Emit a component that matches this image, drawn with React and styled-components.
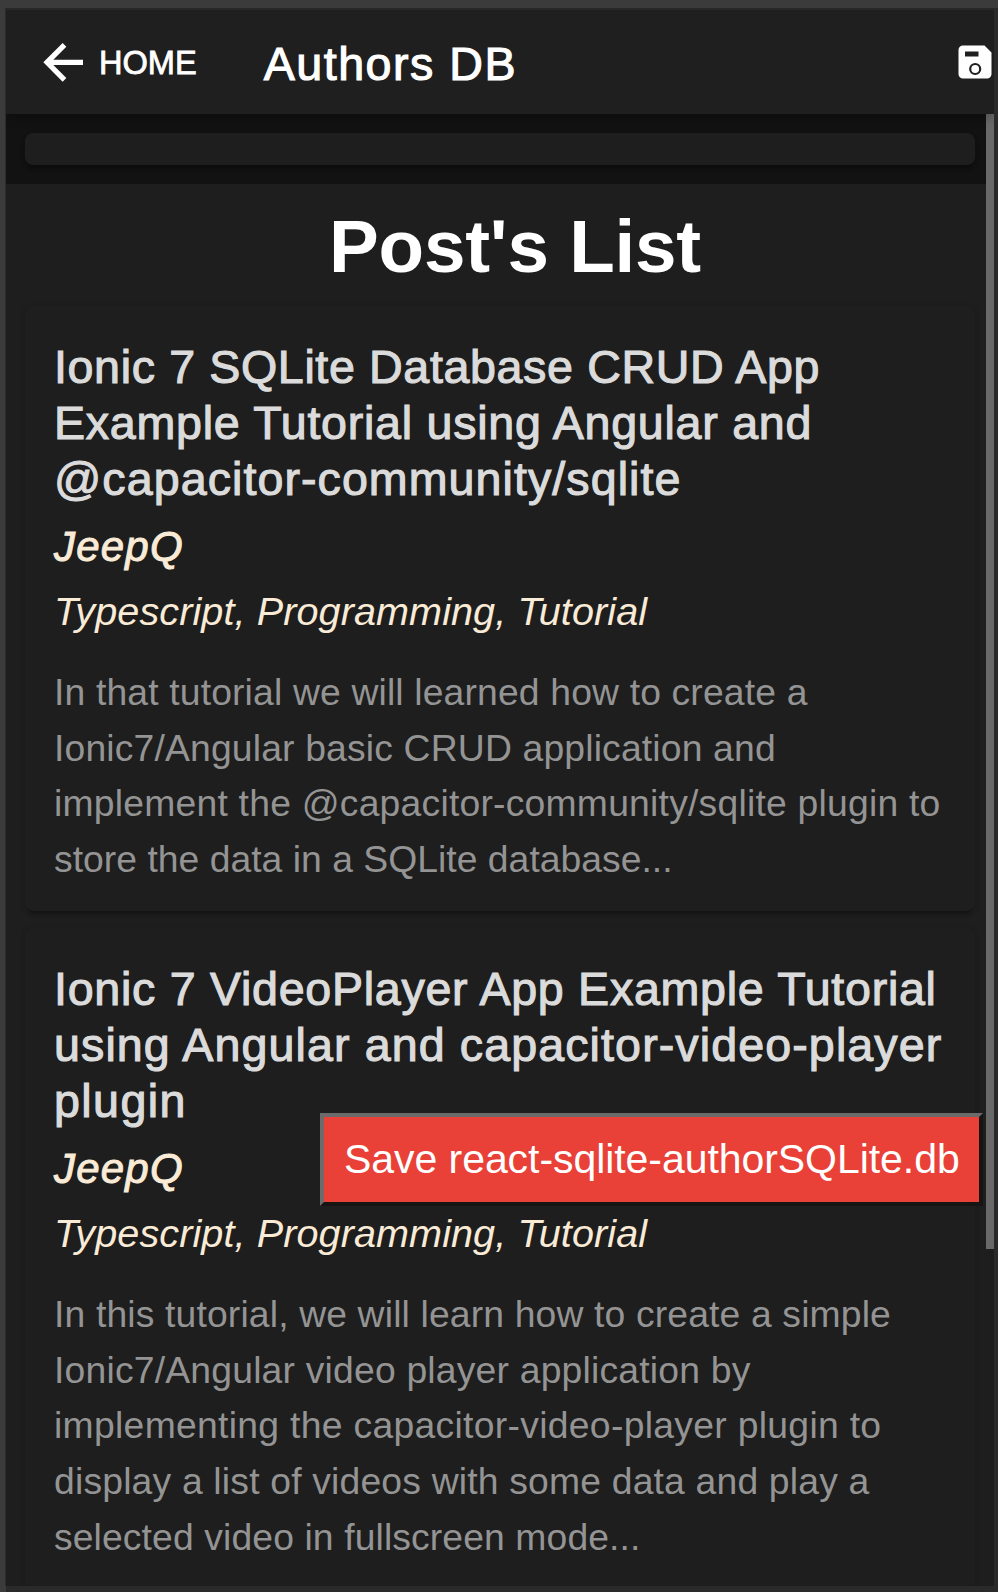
import React from "react";
import styled, { createGlobalStyle } from "styled-components";

const GlobalStyle = createGlobalStyle`
  *, *::before, *::after { box-sizing: border-box; }
  html, body { margin: 0; padding: 0; background: #2a2a2b; overflow: hidden; }
  body { font-family: "Liberation Sans", Arial, sans-serif; }
  h1, h2, h3, p { margin: 0; font-weight: 400; }
`;

const Desktop = styled.div`
  width: 998px;
  height: 1592px;
  padding: 8px 4px 6px 5px;
  background:
    linear-gradient(#3b3b3b, #3b3b3b) top left / 100% 8px no-repeat,
    linear-gradient(#3b3b3b, #3b3b3b) top left / 6px 100% no-repeat,
    #2a2a2b;
`;

const Screen = styled.div`
  position: relative;
  display: flex;
  flex-direction: column;
  height: 1578px;
  border-left: 1px solid #2b2b2b;
  background: #1e1e1e;
  overflow: hidden;
`;

const Toolbar = styled.header`
  display: flex;
  flex: none;
  align-items: center;
  height: 106px;
  padding: 0 2px 0 28px;
  border-top: 2px solid #282828;
  background: #1f1f1f;
  color: #fff;
  position: relative;
  z-index: 1;
  box-shadow: 0 4px 10px rgba(0, 0, 0, 0.25);
`;

const BackButton = styled.button`
  display: flex;
  align-items: center;
  padding: 0;
  border: 0;
  background: none;
  color: inherit;
  font: 32.6px/40px "Liberation Sans", Arial, sans-serif;
  -webkit-text-stroke: 0.8px currentColor;

  svg { display: block; margin-right: 5px; }
`;

const BackLabel = styled.span`
  padding-top: 2px;
`;

const ToolbarTitle = styled.h1`
  margin-left: 67px;
  padding-top: 3px;
  flex: 1;
  font-size: 46.6px;
  line-height: 56px;
  letter-spacing: 1.5px;
  -webkit-text-stroke: 1.1px currentColor;
`;

const SaveIcon = styled.svg`
  display: block;
  width: 34px;
  height: 34px;
`;

const Body = styled.div`
  display: flex;
  flex: 1;
  min-height: 0;
`;

const Content = styled.main`
  flex: 1;
  min-width: 0;
`;

const ScrollTrack = styled.div`
  width: 8px;
  background: #1e1e1e;
`;

const ScrollThumb = styled.div`
  height: 1135px;
  background: #696969;
`;

const elevation = `
  box-shadow: 0 7px 2.4px -4.7px rgba(0, 0, 0, 0.2),
    0 3px 4.7px 0 rgba(0, 0, 0, 0.1),
    0 2.4px 9px 0 rgba(0, 0, 0, 0.05);
`;

const FormStrip = styled.div`
  height: 70px;
  padding: 19px 11px 19px 19px;
  background: #121212;
`;

const EmptyCard = styled.div`
  height: 32px;
  border-radius: 8px;
  background: #1e1e1e;
  ${elevation}
`;

const ListTitle = styled.h2`
  height: 121px;
  padding-left: 323px;
  font-size: 74.6px;
  font-weight: 700;
  line-height: 124px;
  letter-spacing: -0.2px;
  color: #fff;
  white-space: nowrap;
`;

const Cards = styled.div`
  display: flex;
  flex-direction: column;
  gap: 16px;
  padding: 0 11px 0 19px;
`;

const Card = styled.article`
  height: ${(p) => p.$height}px;
  padding: 35px 0 0 29px;
  border-radius: 9px;
  background: #1e1e1e;
  ${elevation}
`;

const Line = styled.span`
  display: block;
  white-space: nowrap;
  letter-spacing: ${(p) => p.$tracking}px;
`;

const PostTitle = styled.h3`
  font-size: 46.6px;
  line-height: 55.8px;
  color: #dbdbdb;
  -webkit-text-stroke: 1.1px currentColor;
`;

const Author = styled.p`
  margin-top: 15px;
  font-size: 42px;
  font-style: italic;
  line-height: 50px;
  letter-spacing: 1.2px;
  color: #faebd7;
  -webkit-text-stroke: 1px currentColor;
`;

const Tags = styled.p`
  margin-top: 15px;
  font-size: 39.6px;
  font-style: italic;
  line-height: 48px;
  letter-spacing: 0.09px;
  color: #faebd7;
`;

const Description = styled.p`
  margin-top: 29.4px;
  font-size: 37.3px;
  line-height: 55.8px;
  color: #949494;
`;

const SaveToast = styled.button`
  position: absolute;
  top: 1105px;
  left: 314px;
  width: 663px;
  height: 93px;
  padding: 0 0 0 20px;
  border: 4px solid;
  border-color: #6b6b6b #171414 #171414 #6b6b6b;
  background: #e94138;
  color: #fff;
  font: 41px/83px "Liberation Sans", Arial, sans-serif;
  letter-spacing: -0.06px;
  text-align: left;
  white-space: nowrap;
`;

const posts = [
  {
    height: 606,
    title: [
      ["Ionic 7 SQLite Database CRUD App", 0.63],
      ["Example Tutorial using Angular and", 0.74],
      ["@capacitor-community/sqlite", 1.06],
    ],
    author: "JeepQ",
    tags: "Typescript, Programming, Tutorial",
    description: [
      ["In that tutorial we will learned how to create a", 0.15],
      ["Ionic7/Angular basic CRUD application and", 0.16],
      ["implement the @capacitor-community/sqlite plugin to", 0.22],
      ["store the data in a SQLite database...", 0.02],
    ],
  },
  {
    height: 680,
    title: [
      ["Ionic 7 VideoPlayer App Example Tutorial", 0.72],
      ["using Angular and capacitor-video-player", 1.1],
      ["plugin", 1.4],
    ],
    author: "JeepQ",
    tags: "Typescript, Programming, Tutorial",
    description: [
      ["In this tutorial, we will learn how to create a simple", 0.145],
      ["Ionic7/Angular video player application by", 0.195],
      ["implementing the capacitor-video-player plugin to", 0.3],
      ["display a list of videos with some data and play a", 0.18],
      ["selected video in fullscreen mode...", 0.11],
    ],
  },
];

function Lines({ items }) {
  return items.map(([text, tracking]) => (
    <Line key={text} $tracking={tracking}>{text}</Line>
  ));
}

function Post({ post }) {
  return (
    <Card $height={post.height}>
      <PostTitle><Lines items={post.title} /></PostTitle>
      <Author>{post.author}</Author>
      <Tags>{post.tags}</Tags>
      <Description><Lines items={post.description} /></Description>
    </Card>
  );
}

export default function App() {
  return (
    <>
      <GlobalStyle />
      <Desktop>
        <Screen>
          <Toolbar>
            <BackButton>
              <svg width="60" height="60" viewBox="0 0 60 60">
                <path
                  d="M30.5 12.8L13 30.3L30.5 47.8M13 30.3H49"
                  fill="none"
                  stroke="#fff"
                  strokeWidth="5.2"
                />
              </svg>
              <BackLabel>HOME</BackLabel>
            </BackButton>
            <ToolbarTitle>Authors DB</ToolbarTitle>
            <SaveIcon viewBox="0 0 34 34">
              <path
                d="M5 .5H26.5L33.5 7.5V29a4.5 4.5 0 0 1-4.5 4.5H5A4.5 4.5 0 0 1 .5 29V5A4.5 4.5 0 0 1 5 .5Z"
                fill="#fff"
              />
              <rect x="7" y="6.5" width="13.5" height="5" fill="#1f1f1f" />
              <circle cx="17.2" cy="24" r="5" fill="none" stroke="#1f1f1f" strokeWidth="2.2" />
            </SaveIcon>
          </Toolbar>
          <Body>
            <Content>
              <FormStrip><EmptyCard /></FormStrip>
              <ListTitle>Post's List</ListTitle>
              <Cards>
                {posts.map((post) => <Post key={post.title[0][0]} post={post} />)}
              </Cards>
            </Content>
            <ScrollTrack><ScrollThumb /></ScrollTrack>
          </Body>
          <SaveToast>Save react-sqlite-authorSQLite.db</SaveToast>
        </Screen>
      </Desktop>
    </>
  );
}
